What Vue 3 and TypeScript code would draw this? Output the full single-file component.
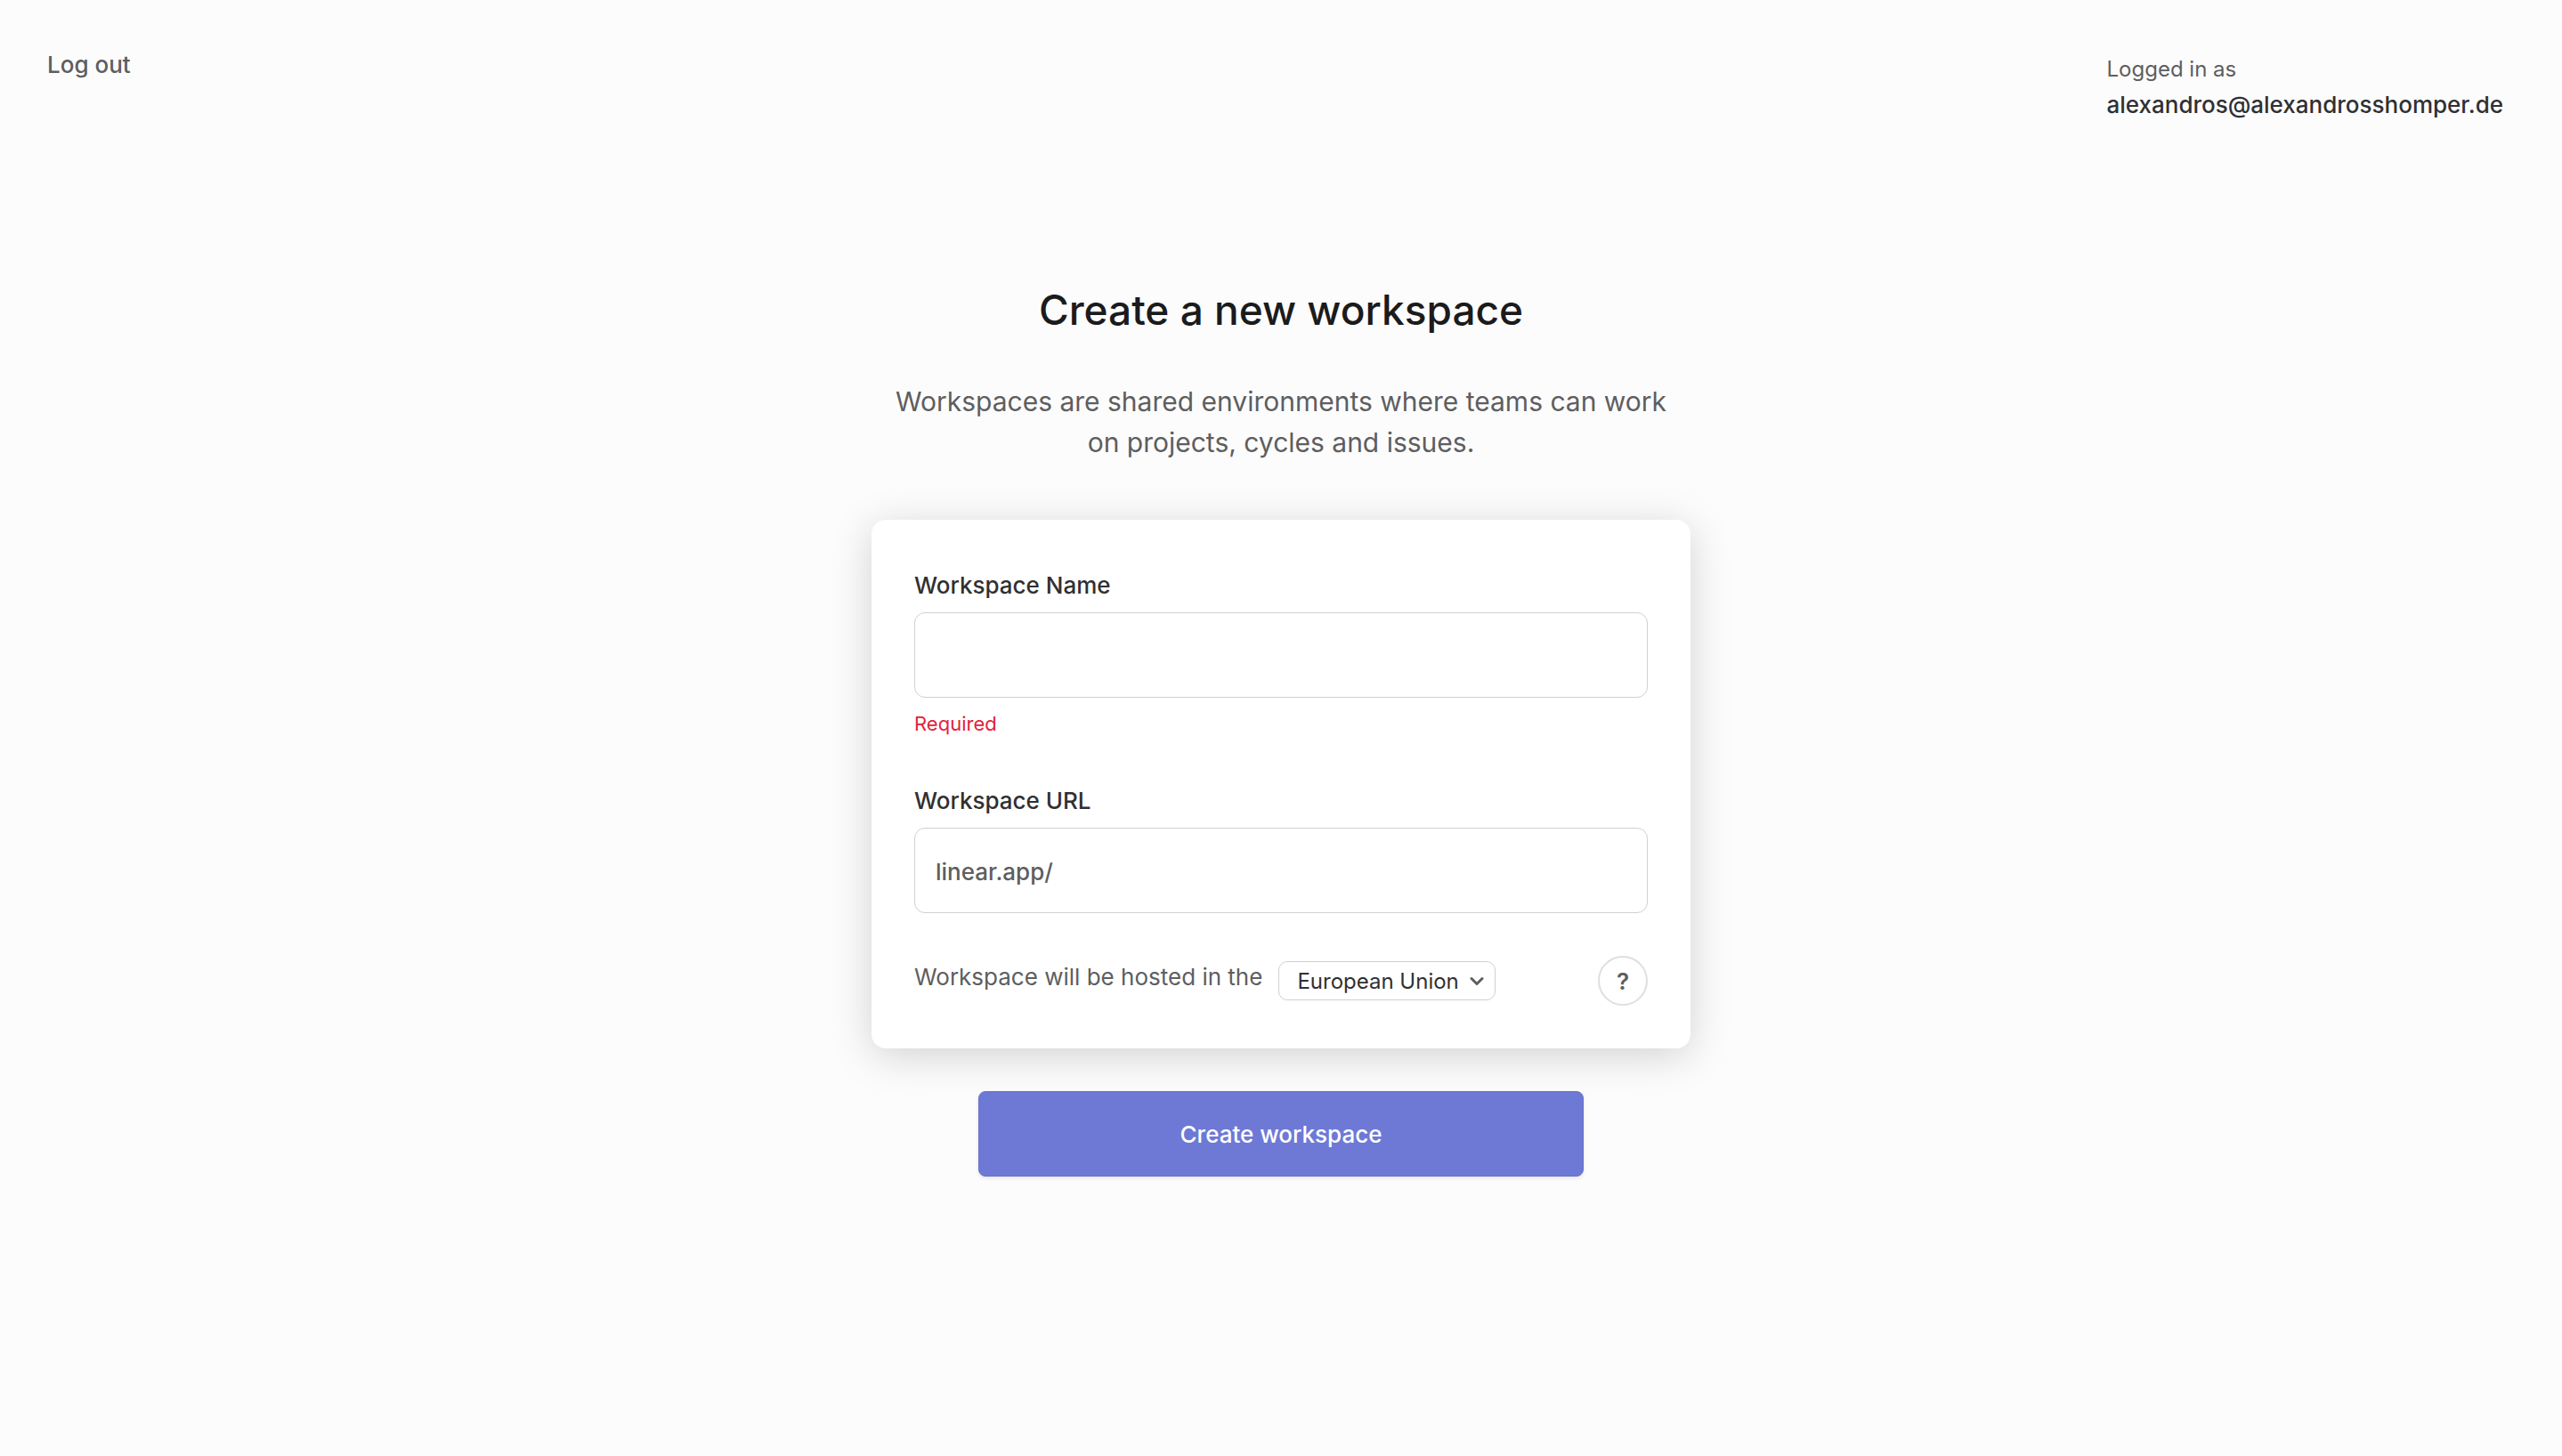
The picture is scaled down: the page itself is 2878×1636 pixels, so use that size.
<script setup lang="ts">
import { ref } from 'vue'

const email = 'alexandros@alexandrosshomper.de'
const regions = ['European Union', 'United States']

const workspaceName = ref('')
const workspaceUrl = ref('')
const region = ref(regions[0])
</script>

<template>
  <div class="page">
    <header class="topbar">
      <button type="button" class="logout">Log out</button>
      <div class="account">
        <div class="account-label">Logged in as</div>
        <div class="account-email">{{ email }}</div>
      </div>
    </header>

    <main class="content">
      <h1>Create a new workspace</h1>
      <p class="intro">
        Workspaces are shared environments where teams can work on projects, cycles and issues.
      </p>

      <form class="form" @submit.prevent>
        <div class="card">
          <div class="field">
            <label for="workspace-name">Workspace Name</label>
            <div class="box">
              <input id="workspace-name" v-model="workspaceName" type="text" aria-describedby="name-error" />
            </div>
            <div v-if="!workspaceName" id="name-error" class="error">Required</div>
          </div>

          <div class="field">
            <label for="workspace-url">Workspace URL</label>
            <div class="box">
              <span class="prefix">linear.app/</span>
              <input id="workspace-url" v-model="workspaceUrl" type="text" />
            </div>
          </div>

          <div class="hosting">
            <label class="hosting-label" for="region">Workspace will be hosted in the</label>
            <div class="select">
              <select id="region" v-model="region">
                <option v-for="name in regions" :key="name" :value="name">{{ name }}</option>
              </select>
              <svg class="chevron" viewBox="0 0 16 12" aria-hidden="true">
                <path d="M2 2.5 8 8.5 14 2.5" />
              </svg>
            </div>
            <button type="button" class="help">?</button>
          </div>
        </div>

        <button type="submit" class="submit">Create workspace</button>
      </form>
    </main>
  </div>
</template>

<style>
body {
  margin: 0;
  background: #fcfcfc;
}
</style>

<style scoped>
.page {
  min-height: 100vh;
  box-sizing: border-box;
  font-family: Inter, 'Liberation Sans', sans-serif;
  font-size: 26px;
  color: #303032;
}

.page * {
  box-sizing: border-box;
}

button,
input,
select {
  margin: 0;
  padding: 0;
  border: 0;
  background: none;
  color: inherit;
  font: inherit;
  outline: none;
}

.topbar {
  display: flex;
  justify-content: space-between;
  align-items: flex-start;
  padding: 56px 66px 0 53px;
}

.logout {
  line-height: 34px;
  font-weight: 500;
  color: #5e5e60;
}

.account {
  padding: 2px 0;
  line-height: 40px;
}

.account-label {
  font-size: 24px;
  color: #5e5e60;
}

.account-email {
  font-weight: 500;
}

.content {
  display: flex;
  flex-direction: column;
  align-items: center;
  max-width: 920px;
  margin: 0 auto;
  padding: 180px 0 64px;
}

h1 {
  margin: 0 0 52px;
  font-size: 46px;
  line-height: 56px;
  font-weight: 500;
  color: #1b1b1c;
  text-align: center;
}

.intro {
  margin: 0 0 64px;
  padding: 0 20px;
  font-size: 30px;
  line-height: 46px;
  color: #5e5e60;
  text-align: center;
}

.form {
  display: flex;
  flex-direction: column;
  align-items: center;
  gap: 48px;
  width: 100%;
}

.card {
  width: 100%;
  padding: 56px 48px 48px;
  border-radius: 16px;
  background: #fff;
  box-shadow: 0 8px 46px rgba(0, 0, 0, 0.17);
}

.field + .field {
  margin-top: 56px;
}

.field label {
  display: block;
  margin-bottom: 12px;
  line-height: 36px;
  font-weight: 500;
}

.box {
  display: flex;
  align-items: center;
  height: 96px;
  padding: 2px 23px 0;
  border: 1px solid #d0d0d2;
  border-radius: 12px;
}

.box input {
  flex: 1;
  min-width: 0;
  height: 100%;
}

.prefix {
  font-weight: 500;
  color: #5e5e60;
}

.error {
  margin-top: 16px;
  font-size: 22px;
  line-height: 26px;
  color: #e0243c;
}

.hosting {
  display: flex;
  align-items: center;
  margin-top: 48px;
}

.hosting-label {
  align-self: flex-start;
  margin-right: 18px;
  line-height: 48px;
  color: #5e5e60;
}

.select {
  position: relative;
}

.select select {
  appearance: none;
  display: block;
  height: 44px;
  padding: 0 40px 0 20px;
  border: 1px solid #d0d0d2;
  border-radius: 10px;
  font-size: 24px;
}

.chevron {
  position: absolute;
  top: 17px;
  right: 13px;
  width: 16px;
  height: 12px;
  fill: none;
  stroke: #5e5e60;
  stroke-width: 3;
  stroke-linecap: round;
  stroke-linejoin: round;
  pointer-events: none;
}

.help {
  width: 56px;
  height: 56px;
  margin-left: auto;
  border: 2px solid #dfdfe0;
  border-radius: 50%;
  font-weight: 600;
  color: #5e5e60;
}

.submit {
  width: 680px;
  max-width: 100%;
  height: 96px;
  border: 1px solid #6871cd;
  border-radius: 8px;
  background: #6e79d6;
  box-shadow: 0 2px 4px rgba(0, 0, 0, 0.09);
  font-weight: 500;
  color: #fff;
}
</style>
